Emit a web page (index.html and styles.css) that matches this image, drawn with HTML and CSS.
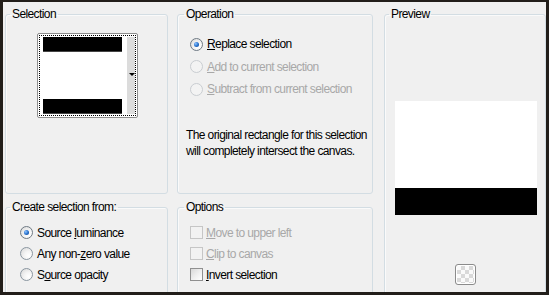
FILE: index.html
```html
<!DOCTYPE html>
<html lang="en">
<head>
    <meta charset="UTF-8">
    <title>Selection from Mask</title>
    <link rel="stylesheet" href="styles.css">
</head>
<body>
    <div class="dialog">
        <div class="col col-left">
            <fieldset class="group group-top">
                <legend>Selection</legend>
                <div class="thumb">
                    <div class="thumb-focus">
                        <div class="thumb-image">
                            <div class="bar"></div>
                            <div class="gap"></div>
                            <div class="bar"></div>
                        </div>
                        <div class="thumb-strip"><span class="arrow"></span></div>
                    </div>
                </div>
            </fieldset>

            <fieldset class="group group-bottom">
                <legend>Create selection from:</legend>
                <div class="choices choices-source">
                    <label class="choice"><span class="radio checked"></span><span>Source <u>l</u>uminance</span></label>
                    <label class="choice"><span class="radio"></span><span>Any non-<u>z</u>ero value</span></label>
                    <label class="choice"><span class="radio"></span><span>S<u>o</u>urce opacity</span></label>
                </div>
            </fieldset>
        </div>

        <div class="col col-mid">
            <fieldset class="group group-top">
                <legend class="legend-mid">Operation</legend>
                <div class="choices choices-op">
                    <label class="choice"><span class="radio checked"></span><span><u>R</u>eplace selection</span></label>
                    <label class="choice disabled"><span class="radio"></span><span><u>A</u>dd to current selection</span></label>
                    <label class="choice disabled"><span class="radio"></span><span><u>S</u>ubtract from current selection</span></label>
                </div>
                <p class="note">The original rectangle for this selection<br>will completely intersect the canvas.</p>
            </fieldset>

            <fieldset class="group group-bottom">
                <legend class="legend-mid">Options</legend>
                <div class="choices choices-opt">
                    <label class="choice disabled"><span class="check"></span><span><u>M</u>ove to upper left</span></label>
                    <label class="choice disabled"><span class="check"></span><span><u>C</u>lip to canvas</span></label>
                    <label class="choice"><span class="check"></span><span><u>I</u>nvert selection</span></label>
                </div>
            </fieldset>
        </div>

        <div class="col col-right">
            <fieldset class="group group-preview">
                <legend>Preview</legend>
                <div class="preview">
                    <div class="preview-white"></div>
                    <div class="preview-black"></div>
                </div>
                <div class="checker"></div>
            </fieldset>
        </div>
    </div>
</body>
</html>
```

FILE: styles.css
```css
* {
    margin: 0;
    padding: 0;
    box-sizing: border-box;
}

body {
    background-color: #221e1a;
    overflow: hidden;
    font-family: "Liberation Sans", Arial, sans-serif;
    font-size: 12px;
    letter-spacing: -0.6px;
    color: #000;
}

.dialog {
    margin: 2px 3px 0 3px;
    width: 543px;
    height: 290px;
    background: #f0f0f0;
    padding: 5px 0 0 2px;
    display: flex;
    overflow: hidden;
}

.col {
    display: flex;
    flex-direction: column;
    gap: 6px;
}

.col-left {
    width: 163px;
}

.col-mid {
    width: 196px;
    margin-left: 9px;
}

.col-right {
    width: 162px;
    margin-left: 11px;
}

/* group boxes */
.group {
    border: 1px solid #d3dde3;
    border-radius: 3px;
    box-shadow: inset 1px 1px 0 #fafafa;
    flex-shrink: 0;
}

.group legend {
    line-height: 14px;
    padding: 0 2px;
    margin-left: 4px;
}

.group legend.legend-mid {
    margin-left: 6px;
}

.group-top {
    height: 187px;
}

.group-bottom {
    height: 110px;
}

.group-preview {
    height: 300px;
}

/* selection thumbnail */
.thumb {
    width: 101px;
    height: 85px;
    margin: 12px 0 0 31px;
    border: 1px solid #8d8d8d;
    border-radius: 2px;
    background: #fff;
    padding: 1px;
}

.thumb-focus {
    height: 100%;
    border: 1px dotted #000;
    display: flex;
    padding: 1px 0 1px 3px;
}

.thumb-image {
    width: 80px;
    display: flex;
    flex-direction: column;
}

.thumb-image .bar {
    height: 15px;
    background: #000;
    border-bottom: 1px solid #444;
}

.thumb-image .gap {
    flex: 1;
    background: #fff;
}

.thumb-strip {
    width: 8px;
    margin-left: 5px;
    background: #dcdcdc;
    position: relative;
}

.thumb-strip .arrow {
    position: absolute;
    top: 36px;
    left: 2px;
    border-left: 3px solid transparent;
    border-right: 3px solid transparent;
    border-top: 3px solid #000;
}

/* radios and checkboxes */
.choices {
    display: flex;
    flex-direction: column;
}

.choice {
    display: flex;
    align-items: center;
    white-space: nowrap;
}

.choice.disabled {
    color: #a8a8a8;
}

.choices-op {
    margin-top: 12px;
    padding-left: 12px;
}

.choices-op .choice {
    height: 22.5px;
}

.choices-source {
    margin-top: 8px;
    padding-left: 14px;
}

.choices-source .choice {
    height: 21px;
}

.choices-opt {
    margin-top: 8px;
    padding-left: 12px;
}

.choices-opt .choice {
    height: 21px;
}

.radio {
    width: 13px;
    height: 13px;
    border-radius: 50%;
    border: 1px solid #8a96a0;
    background: radial-gradient(circle at 70% 70%, #ffffff 0%, #f4f4f4 40%, #d6d6d6 100%);
    margin-right: 4px;
    position: relative;
    flex-shrink: 0;
}

.radio.checked {
    border-color: #6f7a84;
}

.radio.checked::after {
    content: "";
    position: absolute;
    top: 3px;
    left: 3px;
    width: 5px;
    height: 5px;
    border-radius: 50%;
    background: radial-gradient(circle at 35% 35%, #8ec4ff 0%, #2a74d0 50%, #0d3f86 100%);
}

.choice.disabled .radio {
    border-color: #c9cdd1;
    background: #f3f3f3;
}

.check {
    width: 13px;
    height: 13px;
    border: 1px solid #8f8f8f;
    background: linear-gradient(135deg, #d8d8d8 0%, #f0f0f0 55%, #ffffff 100%);
    margin-right: 3px;
    flex-shrink: 0;
}

.choice.disabled .check {
    border-color: #c6c6c6;
    background: #f2f2f2;
}

.note {
    margin-top: 26px;
    padding-left: 8px;
    line-height: 16px;
}

/* preview */
.preview {
    width: 142px;
    margin: 80px 0 0 10px;
}

.preview-white {
    height: 87px;
    background: #fff;
}

.preview-black {
    height: 27px;
    background: #000;
}

.checker {
    width: 21px;
    height: 21px;
    margin: 49px auto 0 auto;
    border: 1px solid #8b8b8b;
    border-radius: 3px;
    background-color: #fafafa;
    background-image:
        linear-gradient(45deg, #d9d9d9 25%, transparent 25%, transparent 75%, #d9d9d9 75%),
        linear-gradient(45deg, #d9d9d9 25%, transparent 25%, transparent 75%, #d9d9d9 75%);
    background-size: 8px 8px;
    background-position: 1px 1px, 5px 5px;
    box-shadow: inset 0 0 0 1px #fff;
}
```
